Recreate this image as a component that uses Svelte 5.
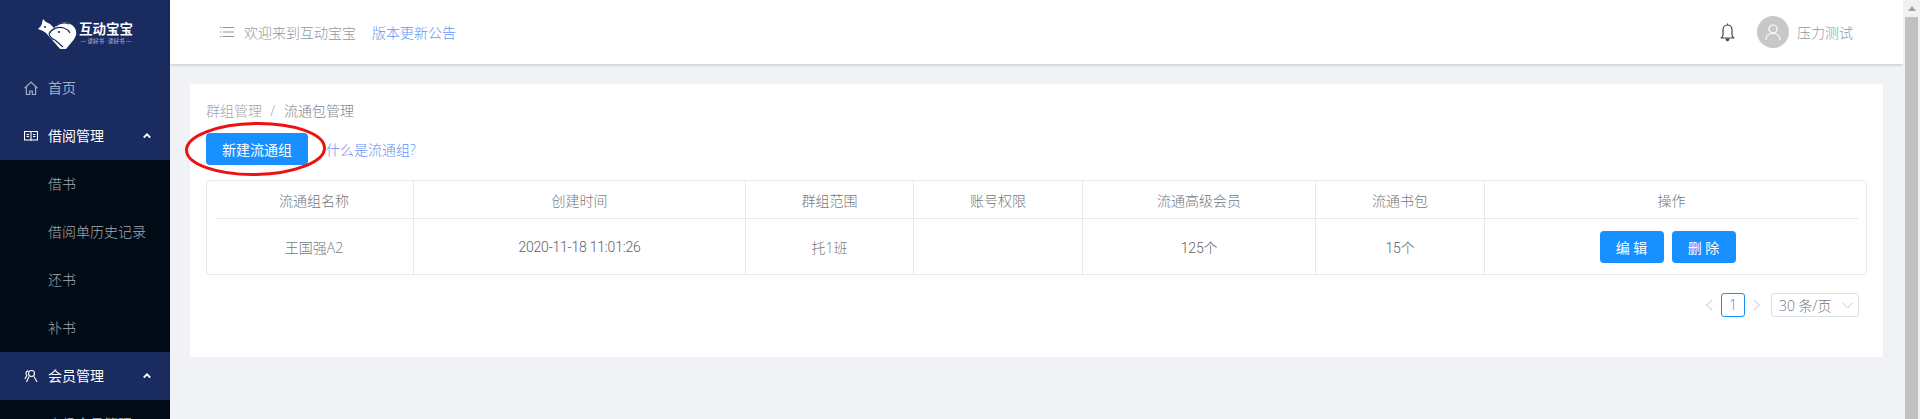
<script>
  const subItems = ['借书', '借阅单历史记录', '还书', '补书']

  const columns = [
    { title: '流通组名称', value: '王国强A2' },
    { title: '创建时间', value: '2020-11-18 11:01:26', numeric: true },
    { title: '群组范围', value: '托1班' },
    { title: '账号权限', value: '' },
    { title: '流通高级会员', value: '125个', numeric: true },
    { title: '流通书包', value: '15个', numeric: true },
  ]
</script>

<div class="page">
  <aside class="sidebar">
    <div class="logo">
      <svg class="logo-mark" width="40" height="30" viewBox="0 0 40 30">
        <path fill="#fff" d="M5 0l3 3 4 2 4 4 3-3c4-3 9-3 13-1 5 2 7 7 6 11-1 3-3 6-5 8l-5 6c-1 2-3 2-5 1L8 14 5 12 0 10l3-3 1-3z"/>
        <path fill="none" stroke="#1a2b5f" stroke-width="1.200" d="M11 15c2-5 9-8 15-6 3 1 5 3 6 5M17 21l8 7M11 15c1 3 3 5 6 6"/>
        <path fill="none" stroke="#1a2b5f" stroke-width="1.100" d="M18 7c3-3 9-4 13-2"/>
        <circle cx="21" cy="13" r="1.100" fill="#1a2b5f"/>
        <circle cx="7" cy="8" r="1" fill="#1a2b5f"/>
      </svg>
      <div class="logo-text">
        <div class="logo-name">互动宝宝</div>
        <div class="logo-slogan">— 读好书 · 读好书 —</div>
      </div>
    </div>

    <div class="nav-item">
      <svg class="nav-icon" width="14" height="14" viewBox="0 0 14 14" fill="none" stroke="currentColor" stroke-width="1.200">
        <path d="M.6 7.200L7 1l6.400 6.200M2.400 5.600v7.900h3.300v-3.500h2.600v3.500h3.300V5.600"/>
      </svg>
      <span>首页</span>
    </div>

    <div class="nav-item open">
      <svg class="nav-icon" width="14" height="14" viewBox="0 0 14 14" fill="none" stroke="currentColor" stroke-width="1.100">
        <path d="M.5 2.500h5.500c.6 0 1 .3 1 .8 0-.5.4-.8 1-.8h5.500v8.500H8c-.6 0-1 .3-1 .8 0-.5-.4-.8-1-.8H.5zM7 3.300v8.500M2.500 5.500h2.500M2.500 7.500h2.500M9 5.500h2.500M9 7.500h2.500"/>
      </svg>
      <span>借阅管理</span>
      <svg class="chevron" width="8" height="6" viewBox="0 0 8 6"><path d="M.8 4.500L4 1.300l3.200 3.200" fill="none" stroke="#fff" stroke-width="1.800"/></svg>
    </div>

    <div class="sub-menu">
      {#each subItems as item}
        <div class="sub-item">{item}</div>
      {/each}
    </div>

    <div class="nav-item open">
      <svg class="nav-icon" width="14" height="14" viewBox="0 0 14 14" fill="none" stroke="currentColor" stroke-width="1.100">
        <circle cx="7.500" cy="4.500" r="3"/>
        <path d="M5 7.500L2.500 13M10 7.500l3 5.500M4.500 1.800C3 2 2 3.200 2 4.500c0 .8.300 1.400.8 2L.8 10"/>
      </svg>
      <span>会员管理</span>
      <svg class="chevron" width="8" height="6" viewBox="0 0 8 6"><path d="M.8 4.500L4 1.300l3.200 3.200" fill="none" stroke="#fff" stroke-width="1.800"/></svg>
    </div>

    <div class="sub-menu">
      <div class="sub-item">高级会员管理</div>
    </div>
  </aside>

  <div class="main">
    <header class="topbar">
      <svg class="list-icon" width="14" height="12" viewBox="0 0 14 12" fill="none" stroke="#909399" stroke-width="1">
        <path d="M3 1.500h11M3 6h11M3 10.500h11M0 1.500h1.500M0 6h1.500M0 10.500h1.500"/>
      </svg>
      <span class="welcome">欢迎来到互动宝宝</span>
      <span class="notice">版本更新公告</span>
      <div class="user">
        <svg class="bell" width="15" height="19" viewBox="0 0 15 19" fill="none" stroke="#444" stroke-width="1.200">
          <path d="M7.500 2c-2.800 0-4.500 2-4.500 5v5c0 1.200-.6 2.200-2.200 3h13.400c-1.600-.8-2.200-1.800-2.200-3V7c0-3-1.700-5-4.500-5zM7.500.5V2"/>
          <path fill="#444" stroke="none" d="M5.500 15.500h4c0 1.500-.8 2.700-2 2.700s-2-1.200-2-2.700z"/>
        </svg>
        <div class="avatar">
          <svg width="16" height="17" viewBox="0 0 16 17" fill="none" stroke="#fff" stroke-width="1.200">
            <circle cx="8" cy="5" r="4"/>
            <path d="M1 16c0-4 3-6.500 7-6.500s7 2.500 7 6.500"/>
          </svg>
        </div>
        <span class="user-name">压力测试</span>
      </div>
    </header>

    <div class="content">
      <div class="card">
        <div class="breadcrumb">
          <span class="crumb-root">群组管理</span>
          <span class="crumb-sep">/</span>
          <span class="crumb-current">流通包管理</span>
        </div>

        <div class="toolbar">
          <button class="btn btn-new">新建流通组</button>
          <span class="help-link">什么是流通组?</span>
          <svg class="annotation" width="146" height="60" viewBox="0 0 146 60">
            <ellipse cx="70.500" cy="30" rx="69" ry="25.500" transform="rotate(-1 70.500 30)" fill="none" stroke="#ee1111" stroke-width="3"/>
          </svg>
        </div>

        <div class="table">
          <div class="row">
            {#each columns as col}
              <div class="cell head">{col.title}</div>
            {/each}
            <div class="cell head">操作</div>
          </div>
          <div class="row-line"></div>
          <div class="row body">
            {#each columns as col}
              <div class="cell" class:numeric={col.numeric}>{col.value}</div>
            {/each}
            <div class="cell actions">
              <button class="btn btn-small">编 辑</button>
              <button class="btn btn-small">删 除</button>
            </div>
          </div>
        </div>

        <div class="pagination">
          <svg width="8" height="12" viewBox="0 0 8 12" fill="none" stroke="#c0c4cc" stroke-width="1"><path d="M7 1L1.500 6 7 11"/></svg>
          <span class="page-num">1</span>
          <svg width="8" height="12" viewBox="0 0 8 12" fill="none" stroke="#c0c4cc" stroke-width="1"><path d="M1 1l5.500 5L1 11"/></svg>
          <div class="page-size">
            <span>30 条/页</span>
            <svg width="11" height="7" viewBox="0 0 11 7" fill="none" stroke="#c0c4cc" stroke-width="1"><path d="M.5 1l5 5 5-5"/></svg>
          </div>
        </div>
      </div>
    </div>
  </div>

  <div class="scrollbar">
    <div class="scroll-arrow"></div>
    <div class="scroll-thumb"></div>
  </div>
</div>

<style>
  :global(body) {
    margin: 0;
  }
  .page {
    display: flex;
    height: 419px;
    overflow: hidden;
    font-family: "Open Sans", "Noto Sans CJK SC", sans-serif;
    font-size: 14px;
    font-weight: 300;
    color: #606266;
    background: #f0f2f5;
  }

  /* sidebar */
  .sidebar {
    width: 170px;
    flex-shrink: 0;
    background: #1a2b5f;
    overflow: hidden;
  }
  .logo {
    height: 64px;
    display: flex;
    align-items: center;
    padding-left: 38px;
    gap: 1px;
  }
  .logo-mark {
    margin-top: 4px;
  }
  .logo-text {
    color: #fff;
    text-align: center;
    margin-top: 4px;
  }
  .logo-name {
    font-size: 13.500px;
    font-weight: 700;
    line-height: 15px;
  }
  .logo-slogan {
    font-size: 5.500px;
    line-height: 9px;
    white-space: nowrap;
  }
  .nav-item {
    height: 48px;
    display: flex;
    align-items: center;
    padding-left: 24px;
    color: #a3adc4;
    position: relative;
  }
  .nav-item span {
    margin-top: -2px;
    font-weight: 400;
  }
  .nav-item.open {
    color: #fff;
  }
  .nav-icon {
    margin-right: 10px;
  }
  .chevron {
    position: absolute;
    right: 19px;
    top: 21px;
  }
  .sub-menu {
    background: #000b16;
  }
  .sub-item {
    height: 48px;
    line-height: 48px;
    padding-left: 48px;
    color: #a5acb3;
  }

  /* top bar */
  .main {
    flex: 1;
    min-width: 0;
    display: flex;
    flex-direction: column;
  }
  .topbar {
    height: 64px;
    flex-shrink: 0;
    box-sizing: border-box;
    background: #fff;
    box-shadow: 0 1px 3px rgba(0, 0, 0, 0.2);
    display: flex;
    align-items: center;
    padding: 0 50px 0 50px;
  }
  .list-icon {
    margin-right: 10px;
  }
  .welcome {
    color: #8f98a0;
    margin-right: 16px;
  }
  .notice {
    color: #5f94f5;
  }
  .user {
    margin-left: auto;
    display: flex;
    align-items: center;
  }
  .bell {
    margin-right: 22px;
  }
  .avatar {
    width: 32px;
    height: 32px;
    border-radius: 50%;
    background: #c8c8c8;
    display: flex;
    align-items: center;
    justify-content: center;
    margin-right: 8px;
  }
  .user-name {
    color: #8f98a0;
  }

  /* card */
  .content {
    padding: 20px;
  }
  .card {
    background: #fff;
    height: 273px;
    box-sizing: border-box;
    padding: 16px;
  }
  .breadcrumb {
    height: 22px;
    line-height: 22px;
  }
  .crumb-root {
    color: #a0a5ab;
  }
  .crumb-sep {
    color: #a0a5ab;
    margin: 0 5.500px 0 4.500px;
  }
  .crumb-current {
    color: #80858c;
  }
  .toolbar {
    position: relative;
    display: flex;
    align-items: center;
    margin-top: 11px;
    height: 32px;
  }
  .btn {
    border: none;
    background: #1890ff;
    color: #fff;
    border-radius: 4px;
    font-family: inherit;
    font-size: 14px;
    font-weight: 400;
    padding: 0;
    height: 32px;
  }
  .btn-new {
    width: 102px;
  }
  .help-link {
    color: #5f94f5;
    margin-left: 18px;
  }
  .annotation {
    position: absolute;
    left: -21px;
    top: -14px;
    pointer-events: none;
  }

  /* table */
  .table {
    margin-top: 15px;
    border: 1px solid #e8e8e8;
    border-radius: 4px;
    box-sizing: border-box;
    height: 95px;
    position: relative;
  }
  .row {
    display: grid;
    grid-template-columns: 207px 332px 168px 169px 233px 169px 1fr;
    height: 37px;
  }
  .row.body {
    height: 56px;
  }
  .row-line {
    height: 1px;
    margin: 0 8px;
    background: #e8e8e8;
  }
  .cell {
    display: flex;
    align-items: center;
    justify-content: center;
    border-right: 1px solid #e8e8e8;
    color: #74787e;
  }
  .cell:first-child {
    padding-left: 8px;
  }
  .cell:last-child {
    border-right: none;
    padding-right: 8px;
  }
  .cell.numeric {
    color: #606266;
    font-family: Roboto, "Noto Sans CJK SC", sans-serif;
    letter-spacing: -0.2px;
  }
  .actions {
    gap: 8px;
  }
  .cell.actions {
    padding-right: 16px;
  }
  .btn-small {
    width: 64px;
  }

  /* pagination */
  .pagination {
    display: flex;
    align-items: center;
    justify-content: flex-end;
    margin-top: 18px;
    padding-right: 8px;
    height: 24px;
  }
  .page-num {
    width: 24px;
    height: 24px;
    box-sizing: border-box;
    border: 1px solid #1890ff;
    border-radius: 3px;
    color: #1890ff;
    text-align: center;
    line-height: 22px;
    margin: 0 8px;
  }
  .page-size {
    width: 88px;
    height: 24px;
    box-sizing: border-box;
    border: 1px solid #dcdfe6;
    border-radius: 3px;
    margin-left: 10px;
    display: flex;
    align-items: center;
    justify-content: space-between;
    padding: 0 5px 0 7px;
    color: #74787e;
  }

  /* page scrollbar */
  .scrollbar {
    width: 17px;
    flex-shrink: 0;
    background: #f1f1f1;
    display: flex;
    flex-direction: column;
    align-items: center;
  }
  .scroll-arrow {
    width: 0;
    height: 0;
    margin-top: 6px;
    margin-bottom: 6px;
    border-left: 4px solid transparent;
    border-right: 4px solid transparent;
    border-bottom: 5px solid #a3a3a3;
  }
  .scroll-thumb {
    width: 13px;
    flex: 1;
    background: #c1c1c1;
  }
</style>
